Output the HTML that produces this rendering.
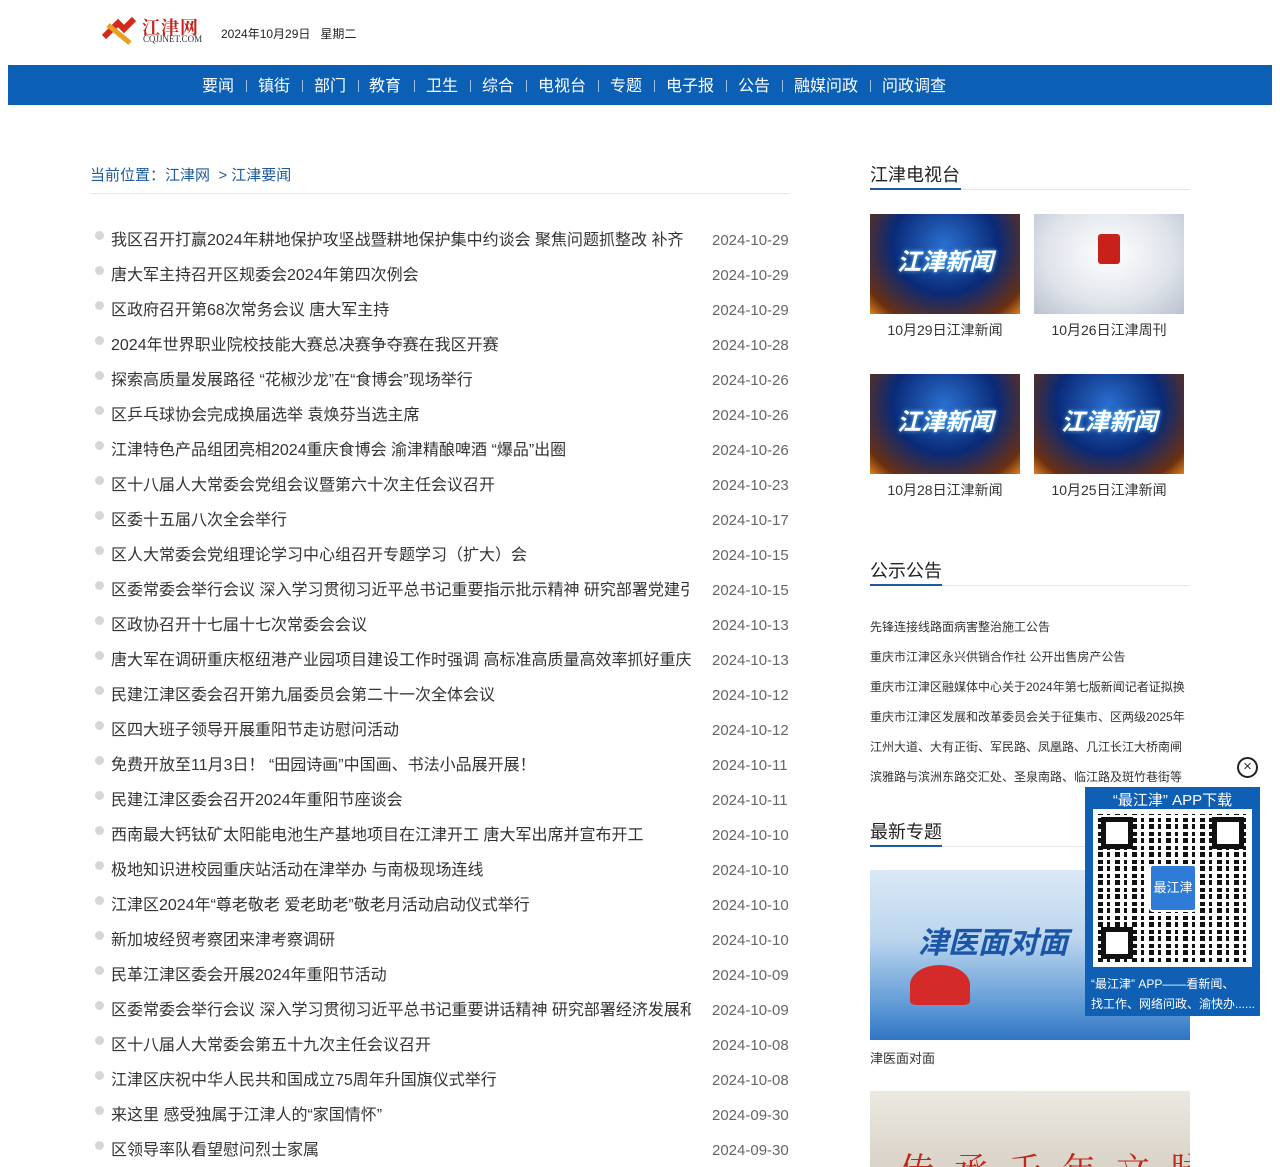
<!DOCTYPE html>
<html><head><meta charset="utf-8"><style>
*{margin:0;padding:0;box-sizing:border-box}
body{width:1280px;height:1167px;overflow:hidden;background:#fff;font-family:"Liberation Sans","Noto Sans CJK SC",sans-serif;color:#333;position:relative}
.abs{position:absolute}
.nav{left:8px;top:65px;width:1264px;height:40px;background:#0b60b5}
.nav span{position:absolute;top:12px;color:#fff;font-size:16px;line-height:20px}
.nav i{position:absolute;top:15px;width:1px;height:12px;background:#9cc0e6}
.li{position:absolute;left:90px;width:700px;height:20px;font-size:16px;line-height:20px}
.li b{position:absolute;left:5px;top:0px;width:9px;height:9px;border-radius:50%;background:#d6d6d6}
.li .t{position:absolute;left:21px;white-space:nowrap;width:580px;overflow:hidden;color:#333}
.li .d{position:absolute;left:622px;color:#666;font-size:15px}
.tv{position:absolute;width:150px;height:100px;background:radial-gradient(ellipse at 50% 30%,#2a6fd0 0%,#0a2a78 50%,#6a3010 85%,#e08020 100%)}
.tv em{position:absolute;left:0;right:0;top:28px;text-align:center;color:#fff;font-style:italic;font-weight:bold;font-size:24px;text-shadow:0 0 4px #6cf}
.cap{position:absolute;width:150px;text-align:center;font-size:14px;color:#333}
.h2{position:absolute;font-size:18px;color:#222}
.notice{position:absolute;left:870px;font-size:12px;color:#333;white-space:nowrap}
</style></head><body>
<div class="abs" style="left:100px;top:15px;width:40px;height:30px">
<svg width="40" height="30"><path d="M4 22 L18 8 L24 14 L34 4" stroke="#d42a1e" stroke-width="6" fill="none"/><path d="M8 10 L30 28" stroke="#e8a020" stroke-width="5"/></svg></div>
<div class="abs" style="left:142px;top:14px;color:#c8201a;font-weight:bold;font-size:18px;font-family:'Noto Serif CJK SC',serif;letter-spacing:1px">江津网</div>
<div class="abs" style="left:143px;top:34px;font-size:9px;color:#333;font-family:'Liberation Serif',serif">CQJJNET.COM</div>
<div class="abs" style="left:221px;top:25px;font-size:12px;color:#222">2024年10月29日&nbsp;&nbsp;&nbsp;星期二</div>
<div class="abs nav">
<span style="left:194px">要闻</span><i style="left:238px"></i>
<span style="left:250px">镇街</span><i style="left:294px"></i>
<span style="left:306px">部门</span><i style="left:350px"></i>
<span style="left:361px">教育</span><i style="left:406px"></i>
<span style="left:418px">卫生</span><i style="left:462px"></i>
<span style="left:474px">综合</span><i style="left:518px"></i>
<span style="left:530px">电视台</span><i style="left:590px"></i>
<span style="left:602px">专题</span><i style="left:646px"></i>
<span style="left:658px">电子报</span><i style="left:718px"></i>
<span style="left:730px">公告</span><i style="left:774px"></i>
<span style="left:786px">融媒问政</span><i style="left:862px"></i>
<span style="left:874px">问政调查</span>
</div>
<div class="abs" style="left:90px;top:164px;font-size:15px;color:#1d5a9e">当前位置：江津网 &nbsp;&gt; 江津要闻</div>
<div class="abs" style="left:90px;top:193px;width:700px;height:1px;background:#e6e6e6"></div>
<div class="li" style="top:231px"><b></b><span class="t">我区召开打赢2024年耕地保护攻坚战暨耕地保护集中约谈会 聚焦问题抓整改 补齐</span><span class="d">2024-10-29</span></div>
<div class="li" style="top:266px"><b></b><span class="t">唐大军主持召开区规委会2024年第四次例会</span><span class="d">2024-10-29</span></div>
<div class="li" style="top:301px"><b></b><span class="t">区政府召开第68次常务会议 唐大军主持</span><span class="d">2024-10-29</span></div>
<div class="li" style="top:336px"><b></b><span class="t">2024年世界职业院校技能大赛总决赛争夺赛在我区开赛</span><span class="d">2024-10-28</span></div>
<div class="li" style="top:371px"><b></b><span class="t">探索高质量发展路径 “花椒沙龙”在“食博会”现场举行</span><span class="d">2024-10-26</span></div>
<div class="li" style="top:406px"><b></b><span class="t">区乒乓球协会完成换届选举 袁焕芬当选主席</span><span class="d">2024-10-26</span></div>
<div class="li" style="top:441px"><b></b><span class="t">江津特色产品组团亮相2024重庆食博会 渝津精酿啤酒 “爆品”出圈</span><span class="d">2024-10-26</span></div>
<div class="li" style="top:476px"><b></b><span class="t">区十八届人大常委会党组会议暨第六十次主任会议召开</span><span class="d">2024-10-23</span></div>
<div class="li" style="top:511px"><b></b><span class="t">区委十五届八次全会举行</span><span class="d">2024-10-17</span></div>
<div class="li" style="top:546px"><b></b><span class="t">区人大常委会党组理论学习中心组召开专题学习（扩大）会</span><span class="d">2024-10-15</span></div>
<div class="li" style="top:581px"><b></b><span class="t">区委常委会举行会议 深入学习贯彻习近平总书记重要指示批示精神 研究部署党建引领</span><span class="d">2024-10-15</span></div>
<div class="li" style="top:616px"><b></b><span class="t">区政协召开十七届十七次常委会会议</span><span class="d">2024-10-13</span></div>
<div class="li" style="top:651px"><b></b><span class="t">唐大军在调研重庆枢纽港产业园项目建设工作时强调 高标准高质量高效率抓好重庆</span><span class="d">2024-10-13</span></div>
<div class="li" style="top:686px"><b></b><span class="t">民建江津区委会召开第九届委员会第二十一次全体会议</span><span class="d">2024-10-12</span></div>
<div class="li" style="top:721px"><b></b><span class="t">区四大班子领导开展重阳节走访慰问活动</span><span class="d">2024-10-12</span></div>
<div class="li" style="top:756px"><b></b><span class="t">免费开放至11月3日！ “田园诗画”中国画、书法小品展开展！</span><span class="d">2024-10-11</span></div>
<div class="li" style="top:791px"><b></b><span class="t">民建江津区委会召开2024年重阳节座谈会</span><span class="d">2024-10-11</span></div>
<div class="li" style="top:826px"><b></b><span class="t">西南最大钙钛矿太阳能电池生产基地项目在江津开工 唐大军出席并宣布开工</span><span class="d">2024-10-10</span></div>
<div class="li" style="top:861px"><b></b><span class="t">极地知识进校园重庆站活动在津举办 与南极现场连线</span><span class="d">2024-10-10</span></div>
<div class="li" style="top:896px"><b></b><span class="t">江津区2024年“尊老敬老 爱老助老”敬老月活动启动仪式举行</span><span class="d">2024-10-10</span></div>
<div class="li" style="top:931px"><b></b><span class="t">新加坡经贸考察团来津考察调研</span><span class="d">2024-10-10</span></div>
<div class="li" style="top:966px"><b></b><span class="t">民革江津区委会开展2024年重阳节活动</span><span class="d">2024-10-09</span></div>
<div class="li" style="top:1001px"><b></b><span class="t">区委常委会举行会议 深入学习贯彻习近平总书记重要讲话精神 研究部署经济发展和</span><span class="d">2024-10-09</span></div>
<div class="li" style="top:1036px"><b></b><span class="t">区十八届人大常委会第五十九次主任会议召开</span><span class="d">2024-10-08</span></div>
<div class="li" style="top:1071px"><b></b><span class="t">江津区庆祝中华人民共和国成立75周年升国旗仪式举行</span><span class="d">2024-10-08</span></div>
<div class="li" style="top:1106px"><b></b><span class="t">来这里 感受独属于江津人的“家国情怀”</span><span class="d">2024-09-30</span></div>
<div class="li" style="top:1141px"><b></b><span class="t">区领导率队看望慰问烈士家属</span><span class="d">2024-09-30</span></div>

<div class="h2" style="left:870px;top:161px">江津电视台</div>
<div class="abs" style="left:870px;top:189px;width:320px;height:1px;background:#e6e6e6"></div>
<div class="abs" style="left:870px;top:188px;width:91px;height:2px;background:#1d5a9e"></div>
<div class="tv" style="left:870px;top:214px"><em>江津新闻</em></div>
<div class="tv" style="left:1034px;top:214px;background:radial-gradient(ellipse at 50% 40%,#fff 0%,#dfe3ea 60%,#b9c2cf 100%)"><div class="abs" style="left:64px;top:20px;width:22px;height:30px;background:#c8201a;border-radius:3px"></div></div>
<div class="cap" style="left:870px;top:320px">10月29日江津新闻</div>
<div class="cap" style="left:1034px;top:320px">10月26日江津周刊</div>
<div class="tv" style="left:870px;top:374px"><em>江津新闻</em></div>
<div class="tv" style="left:1034px;top:374px"><em>江津新闻</em></div>
<div class="cap" style="left:870px;top:480px">10月28日江津新闻</div>
<div class="cap" style="left:1034px;top:480px">10月25日江津新闻</div>

<div class="h2" style="left:870px;top:557px">公示公告</div>
<div class="abs" style="left:870px;top:585px;width:320px;height:1px;background:#e6e6e6"></div>
<div class="abs" style="left:870px;top:584px;width:72px;height:2px;background:#1d5a9e"></div>
<div class="notice" style="top:618px">先锋连接线路面病害整治施工公告</div>
<div class="notice" style="top:648px">重庆市江津区永兴供销合作社 公开出售房产公告</div>
<div class="notice" style="top:678px">重庆市江津区融媒体中心关于2024年第七版新闻记者证拟换</div>
<div class="notice" style="top:708px">重庆市江津区发展和改革委员会关于征集市、区两级2025年</div>
<div class="notice" style="top:738px">江州大道、大有正街、军民路、凤凰路、几江长江大桥南闸</div>
<div class="notice" style="top:768px">滨雅路与滨洲东路交汇处、圣泉南路、临江路及斑竹巷街等</div>

<div class="h2" style="left:870px;top:818px">最新专题</div>
<div class="abs" style="left:870px;top:846px;width:320px;height:1px;background:#e6e6e6"></div>
<div class="abs" style="left:870px;top:845px;width:72px;height:2px;background:#1d5a9e"></div>
<div class="abs" style="left:870px;top:870px;width:320px;height:170px;overflow:hidden;background:linear-gradient(180deg,#dbe9f6 0%,#bcd6ee 40%,#5f9ad6 80%,#2f74c4 100%)">
<div class="abs" style="left:48px;top:48px;font-size:30px;font-weight:bold;font-style:italic;color:#1a55a8;white-space:nowrap">津医面对面</div>
<div class="abs" style="left:40px;top:95px;width:60px;height:40px;background:#d42a2a;border-radius:50% 50% 10% 10%"></div>
</div>
<div class="abs" style="left:870px;top:1048px;font-size:13px">津医面对面</div>
<div class="abs" style="left:870px;top:1091px;width:320px;height:76px;overflow:hidden;background:linear-gradient(180deg,#ece9e2,#d9d3c8)">
<div class="abs" style="left:30px;top:52px;font-size:34px;color:#c0281c;font-family:'Noto Serif CJK SC',serif;letter-spacing:20px;white-space:nowrap">传承千年文脉</div></div>

<div class="abs" style="left:1237px;top:757px;width:21px;height:21px;border:2px solid #222;border-radius:50%;font-size:15px;line-height:16px;text-align:center;background:#fff">×</div>
<div class="abs" style="left:1085px;top:787px;width:175px;height:229px;background:#0f5fb5">
<div class="abs" style="left:0;top:2px;width:175px;text-align:center;color:#fff;font-size:15px">“最江津” APP下载</div>
<div class="abs" style="left:8px;top:22px;width:159px;height:158px;background:#fff;padding:5px;overflow:hidden">
<div style="width:149px;height:148px;background:repeating-linear-gradient(0deg,transparent 0 4px,#fff 4px 7px,transparent 7px 12px,#fff 12px 14px),repeating-linear-gradient(90deg,#111 0 5px,#fff 5px 9px,#111 9px 12px,#fff 12px 17px)"></div>
<div class="abs" style="left:8px;top:8px;width:32px;height:32px;border:5px solid #111;background:#fff"></div>
<div class="abs" style="right:8px;top:8px;width:32px;height:32px;border:5px solid #111;background:#fff"></div>
<div class="abs" style="left:8px;bottom:8px;width:32px;height:32px;border:5px solid #111;background:#fff"></div>
<div class="abs" style="left:56px;top:55px;width:48px;height:48px;background:#2f7bd8;border:2px solid #fff;border-radius:4px;color:#fff;font-size:13px;line-height:44px;text-align:center">最江津</div>
</div>
<div class="abs" style="left:6px;top:187px;color:#fff;font-size:12px;line-height:20px;white-space:nowrap">“最江津” APP——看新闻、<br>找工作、网络问政、渝快办......</div>
</div>
</body></html>
